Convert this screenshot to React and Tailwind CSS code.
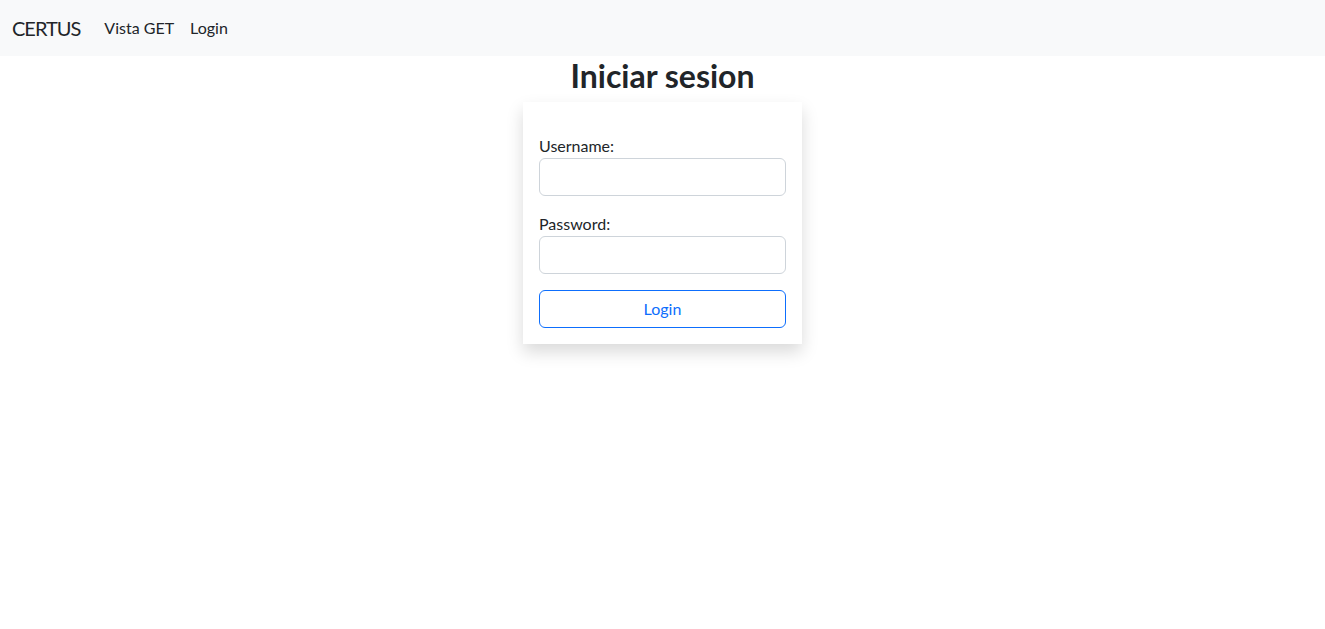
export default function App() {
  return (
    <div className="min-h-screen bg-white font-['Lato',sans-serif] text-[#212529]">
      <nav className="flex h-14 items-center bg-[#f8f9fa] px-3">
        <span className="mr-4 text-xl tracking-[-1px] text-[#212529]">CERTUS</span>
        <a href="#" className="px-2 text-base text-[#212529]">Vista GET</a>
        <a href="#" className="px-2 text-base text-[#212529]">Login</a>
      </nav>

      <h2 className="mb-[7px] pt-px text-center text-[32px] leading-[1.2] font-bold">Iniciar sesion</h2>

      <div className="mx-auto w-[279px] bg-white p-4 pt-8 shadow-[0_8px_16px_rgba(0,0,0,0.15)]">
        <form>
          <label className="block text-base leading-6">Username:</label>
          <input
            type="text"
            className="mb-4 block h-[38px] w-full rounded-md border border-[#ced4da] px-3"
          />
          <label className="block text-base leading-6">Password:</label>
          <input
            type="password"
            className="mb-4 block h-[38px] w-full rounded-md border border-[#ced4da] px-3"
          />
          <button
            type="submit"
            className="block h-[38px] w-full rounded-md border border-[#0d6efd] text-base text-[#0d6efd]"
          >
            Login
          </button>
        </form>
      </div>
    </div>
  )
}
